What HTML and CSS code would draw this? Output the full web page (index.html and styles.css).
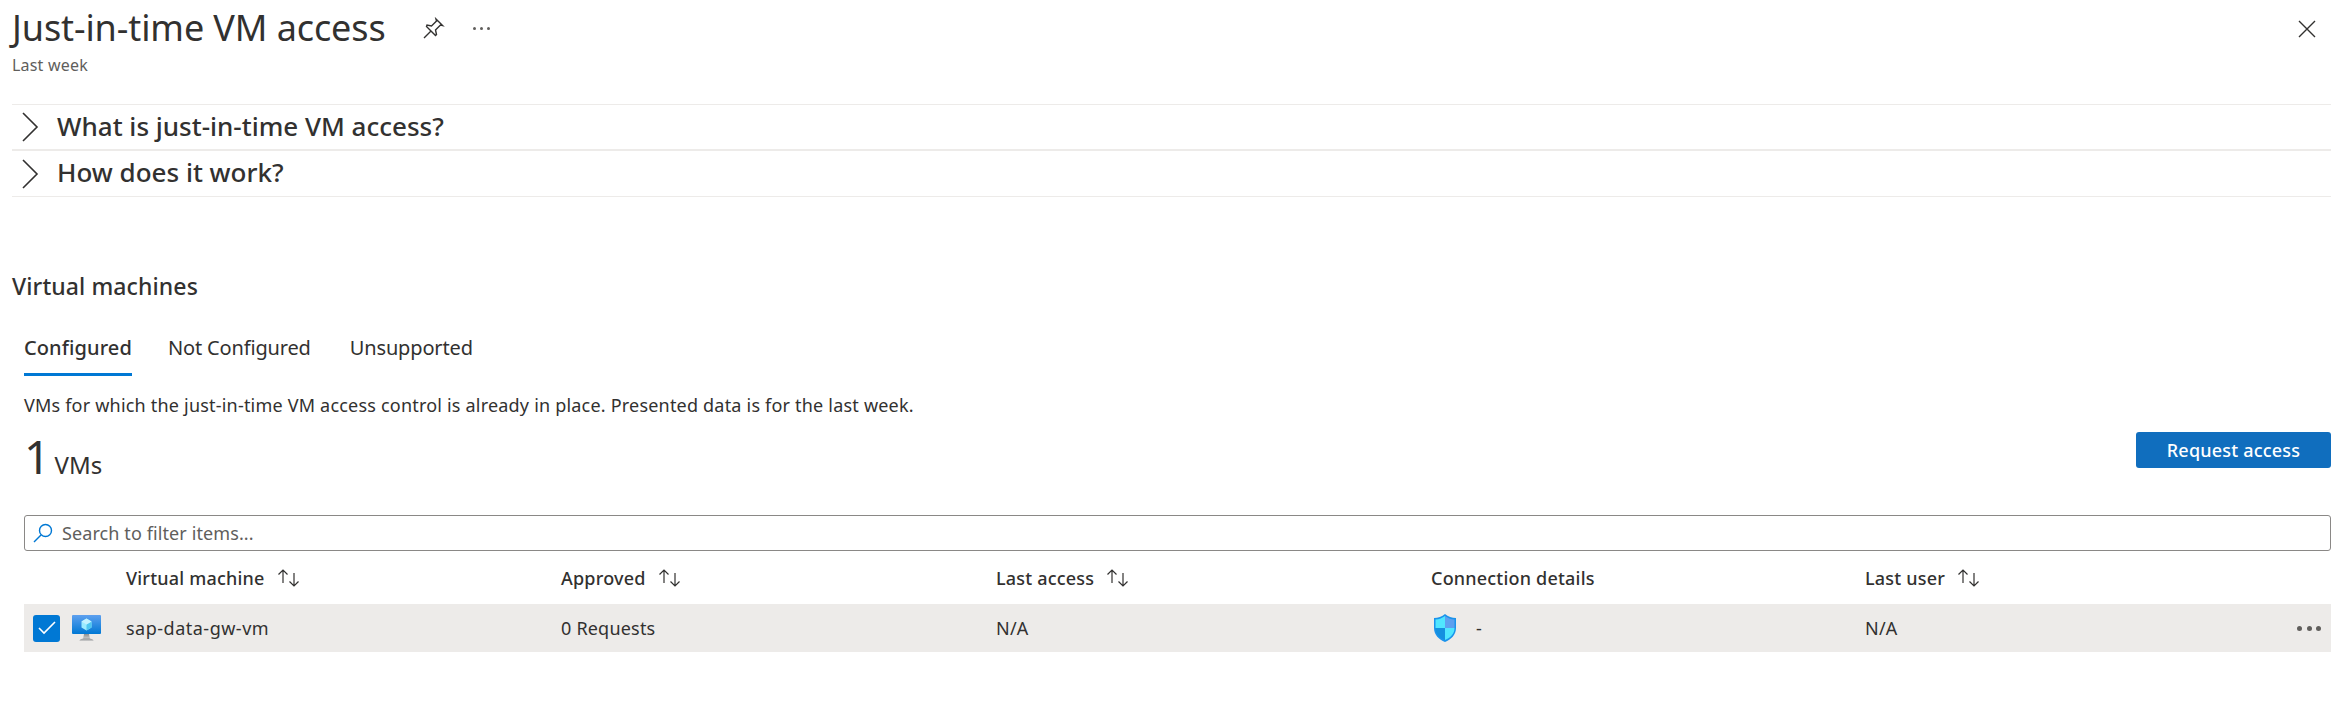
FILE: index.html
```html
<!DOCTYPE html>
<html lang="en">
<head>
    <meta charset="UTF-8">
    <title>Just-in-time VM access</title>
    <link rel="stylesheet" href="styles.css">
</head>
<body>
    <header class="blade-header">
        <div class="title-block">
            <div class="title-row">
                <h1>Just-in-time VM access</h1>
                <svg class="pin-icon" width="22" height="22" viewBox="0 0 22 22" fill="none" stroke="#323130" stroke-width="1.4"><path d="M1 21l6.5-6.5M3.5 9.5l9 9 1-1-1-4.5 5-5 2 .5-6.5-6.500.5 2-5 5-4.500-1z"/></svg>
                <span class="more-dots"><i></i><i></i><i></i></span>
            </div>
            <div class="subtitle">Last week</div>
        </div>
        <svg class="close-icon" width="18" height="18" viewBox="0 0 18 18" stroke="#323130" stroke-width="1.4"><path d="M1 1l16 16M17 1L1 17"/></svg>
    </header>

    <section class="accordion">
        <div class="accordion-item">
            <svg width="18" height="30" viewBox="0 0 18 30" fill="none" stroke="#323130" stroke-width="1.6"><path d="M2 1l14 14L2 29"/></svg>
            <span>What is just-in-time VM access?</span>
        </div>
        <div class="accordion-item">
            <svg width="18" height="30" viewBox="0 0 18 30" fill="none" stroke="#323130" stroke-width="1.6"><path d="M2 1l14 14L2 29"/></svg>
            <span>How does it work?</span>
        </div>
    </section>

    <h2 class="section-title">Virtual machines</h2>

    <nav class="tabs">
        <a class="tab active">Configured</a>
        <a class="tab">Not Configured</a>
        <a class="tab">Unsupported</a>
    </nav>

    <main class="tab-body">
        <p class="description">VMs for which the just-in-time VM access control is already in place. Presented data is for the last week.</p>

        <div class="count-row">
            <div class="count"><span class="count-num">1</span> <span class="count-label">VMs</span></div>
            <button type="button" class="primary-btn">Request access</button>
        </div>

        <div class="search-box">
            <svg width="20" height="20" viewBox="0 0 20 20" fill="none" stroke="#0078d4" stroke-width="1.4"><circle cx="12.500" cy="7.500" r="6"/><path d="M8 12l-7 7"/></svg>
            <span>Search to filter items...</span>
        </div>

        <div class="grid-row grid-head">
            <div></div>
            <div class="col-head">Virtual machine <svg class="sort-icon" width="26" height="20" viewBox="0 0 26 20" fill="none" stroke="#323130" stroke-width="1.200"><path d="M7 15V2M2.500 6.500L7 2l4.500 4.500M18 5v13M13.500 13.500L18 18l4.500-4.500"/></svg></div>
            <div class="col-head">Approved <svg class="sort-icon" width="26" height="20" viewBox="0 0 26 20" fill="none" stroke="#323130" stroke-width="1.200"><path d="M7 15V2M2.500 6.500L7 2l4.500 4.500M18 5v13M13.500 13.500L18 18l4.500-4.500"/></svg></div>
            <div class="col-head">Last access <svg class="sort-icon" width="26" height="20" viewBox="0 0 26 20" fill="none" stroke="#323130" stroke-width="1.200"><path d="M7 15V2M2.500 6.500L7 2l4.500 4.500M18 5v13M13.500 13.500L18 18l4.500-4.500"/></svg></div>
            <div class="col-head">Connection details</div>
            <div class="col-head">Last user <svg class="sort-icon" width="26" height="20" viewBox="0 0 26 20" fill="none" stroke="#323130" stroke-width="1.200"><path d="M7 15V2M2.500 6.500L7 2l4.500 4.500M18 5v13M13.500 13.500L18 18l4.500-4.500"/></svg></div>
        </div>

        <div class="grid-row grid-item">
            <div class="select-cell">
                <span class="checkbox">
                    <svg width="18" height="14" viewBox="0 0 18 14" fill="none" stroke="#fff" stroke-width="1.600"><path d="M1 7l5 5L17 1"/></svg>
                </span>
                <svg class="vm-icon" width="30" height="27" viewBox="0 0 30 27">
                    <defs>
                        <linearGradient id="screenGrad" x1="0" y1="0" x2="0" y2="1">
                            <stop offset="0" stop-color="#5ea0ef"/>
                            <stop offset="1" stop-color="#0078d4"/>
                        </linearGradient>
                        <linearGradient id="standGrad" x1="0" y1="0" x2="0" y2="1">
                            <stop offset="0" stop-color="#8c8e90"/>
                            <stop offset="1" stop-color="#d0d0d0"/>
                        </linearGradient>
                    </defs>
                    <rect x="0" y="0" width="29" height="19" rx="1" fill="url(#screenGrad)"/>
                    <path d="M12 19h5l1 5h-7z" fill="url(#standGrad)"/>
                    <path d="M7.500 26c0-2 3-2.500 7-2.500s7 .5 7 2.500z" fill="url(#standGrad)"/>
                    <path d="M14.500 3.500l5 3v6l-5 3-5-3v-6z" fill="#9cebff"/>
                    <path d="M14.500 9.500l5-3v6l-5 3z" fill="#50c7f0"/>
                    <path d="M14.500 9.500l-5-3 5-3 5 3z" fill="#c3f1ff"/>
                </svg>
            </div>
            <div class="vm-name">sap-data-gw-vm</div>
            <div>0 Requests</div>
            <div>N/A</div>
            <div class="conn-cell">
                <svg width="24" height="30" viewBox="0 0 24 30">
                    <path d="M12 1c3 2.500 7 4 11 4v10c0 7-5 11.500-11 14C6 26.500 1 22 1 15V5c4 0 8-1.500 11-4z" fill="#1b93eb"/>
                    <path d="M12 3c-2.500 2-6 3.300-9.500 3.500V15H12z" fill="#50e6ff"/>
                    <path d="M12 3c2.500 2 6 3.300 9.500 3.500V15H12z" fill="#5ea0ef"/>
                    <path d="M12 15h9.500c0 6-4 9.500-9.500 12z" fill="#50e6ff"/>
                    <path d="M12 15H2.500c0 6 4 9.500 9.500 12z" fill="#1490df"/>
                </svg>
                <span>-</span>
            </div>
            <div class="user-cell">
                <span>N/A</span>
                <span class="row-dots"><i></i><i></i><i></i></span>
            </div>
        </div>
    </main>
</body>
</html>
```

FILE: styles.css
```css
html, body {
    margin: 0;
    padding: 0;
    height: 721px;
    overflow: hidden;
    background-color: #fff;
}
body {
    font-family: "Noto Sans", "Open Sans", sans-serif;
    color: #323130;
    padding: 0 13px 0 12px;
    box-sizing: border-box;
}
.blade-header {
    display: flex;
    justify-content: space-between;
    align-items: flex-start;
    height: 104px;
}
.title-row {
    display: flex;
    align-items: center;
    height: 56px;
}
h1 {
    margin: 0;
    font-size: 36px;
    font-weight: 400;
    letter-spacing: -0.1px;
    line-height: 56px;
}
.pin-icon {
    margin-left: 37px;
}
.more-dots {
    display: flex;
    gap: 4px;
    margin-left: 28px;
}
.more-dots i {
    width: 3px;
    height: 3px;
    border-radius: 50%;
    background-color: #605e5c;
}
.subtitle {
    font-size: 16px;
    line-height: 18px;
    color: #605e5c;
    letter-spacing: 0.2px;
}
.close-icon {
    margin: 20px 15px 0 0;
}
.accordion {
    border-top: 1px solid #edebe9;
}
.accordion-item {
    display: flex;
    align-items: center;
    height: 44px;
    border-bottom: 2px solid #edebe9;
    font-size: 26px;
    font-weight: 500;
    padding-left: 9px;
}
.accordion-item span {
    margin-top: -3px;
}
.accordion-item:last-child {
    height: 45px;
    border-bottom-width: 1px;
}
.accordion-item svg {
    margin-right: 18px;
}
.section-title {
    margin: 74px 0 0 0;
    font-size: 23px;
    font-weight: 500;
    line-height: 30px;
    letter-spacing: 0.1px;
}
.tabs {
    display: flex;
    margin: 32px 0 0 12px;
    font-size: 20px;
}
.tab {
    height: 40px;
    line-height: 30px;
    margin-right: 39px;
    letter-spacing: -0.15px;
}
.tab.active {
    font-weight: 500;
    letter-spacing: 0.1px;
    margin-right: 36px;
    border-bottom: 3px solid #0078d4;
}
.tab-body {
    padding-left: 12px;
}
.description {
    margin: 15px 0 0 0;
    font-size: 18px;
    line-height: 28px;
    letter-spacing: 0.2px;
}
.count-row {
    display: flex;
    justify-content: space-between;
    align-items: flex-start;
    margin-top: 13px;
    height: 83px;
}
.count {
    margin-top: -6px;
}
.count-num {
    font-size: 46px;
    line-height: 60px;
}
.count-label {
    font-size: 24px;
}
.primary-btn {
    width: 195px;
    height: 36px;
    background-color: #106ebe;
    color: #fff;
    border: none;
    border-radius: 3px;
    font-family: inherit;
    font-size: 18px;
    font-weight: 500;
    letter-spacing: 0.2px;
}
.search-box {
    display: flex;
    align-items: center;
    height: 36px;
    border: 1px solid #8a8886;
    border-radius: 3px;
    box-sizing: border-box;
    padding-left: 8px;
    font-size: 18px;
    color: #605e5c;
    letter-spacing: 0.1px;
}
.search-box svg {
    margin-right: 9px;
}
.grid-row {
    display: grid;
    grid-template-columns: 102px 435px 435px 435px 434px 1fr;
    align-items: center;
    font-size: 18px;
    letter-spacing: 0.2px;
}
.grid-head {
    height: 53px;
    font-weight: 500;
}
.col-head {
    display: flex;
    align-items: center;
}
.sort-icon {
    margin-left: 11px;
}
.grid-item {
    height: 48px;
    background-color: #edebe9;
}
.select-cell {
    display: flex;
    align-items: center;
    gap: 12px;
    padding-left: 9px;
}
.checkbox {
    display: flex;
    align-items: center;
    justify-content: center;
    width: 27px;
    height: 27px;
    border-radius: 3px;
    background-color: #0078d4;
}
.vm-name {
    letter-spacing: 0.5px;
}
.conn-cell {
    display: flex;
    align-items: center;
    gap: 19px;
    padding-left: 2px;
}
.user-cell {
    display: flex;
    justify-content: space-between;
    align-items: center;
    padding-right: 10px;
}
.row-dots {
    display: flex;
    gap: 4.500px;
}
.row-dots i {
    width: 5px;
    height: 5px;
    border-radius: 50%;
    background-color: #605e5c;
}
```
